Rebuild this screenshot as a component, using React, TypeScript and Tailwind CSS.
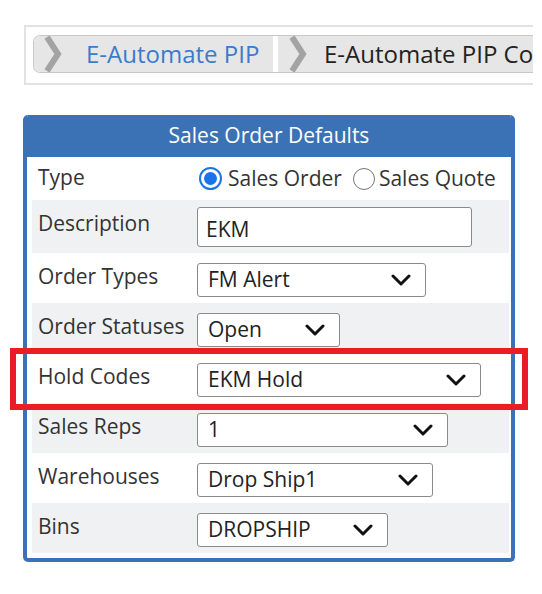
import React from 'react';

function Chevron() {
  return (
    <svg width="20" height="12" viewBox="0 0 20 12" className="shrink-0">
      <polyline points="2,2 10,10 18,2" fill="none" stroke="#111" strokeWidth="3" strokeLinecap="round" strokeLinejoin="round" />
    </svg>
  );
}

function Select({ value, width }: { value: string; width: string }) {
  return (
    <div className={`${width} h-[34px] flex items-center justify-between pl-[10px] pr-[14px] bg-white border border-[#8a8a8a] rounded-[3px] text-[#222]`}>
      <span>{value}</span>
      <Chevron />
    </div>
  );
}

const rows = [
  { label: 'Order Types', value: 'FM Alert', width: 'w-[229px]', bg: 'bg-white' },
  { label: 'Order Statuses', value: 'Open', width: 'w-[143px]', bg: 'bg-[#f0f1f3]' },
  { label: 'Hold Codes', value: 'EKM Hold', width: 'w-[284px]', bg: 'bg-white' },
  { label: 'Sales Reps', value: '1', width: 'w-[251px]', bg: 'bg-[#f0f1f3]' },
  { label: 'Warehouses', value: 'Drop Ship1', width: 'w-[236px]', bg: 'bg-white' },
  { label: 'Bins', value: 'DROPSHIP', width: 'w-[191px]', bg: 'bg-[#f0f1f3]' },
];

export default function App() {
  return (
    <div className="relative w-[542px] h-[594px] bg-white font-['Open_Sans',sans-serif] text-[21px] text-[#333] overflow-hidden">
      {/* breadcrumb */}
      <div className="ml-[24px] mt-[25px] w-[509px] h-[60px] border-y-2 border-l-2 border-[#e2e2e2] pl-[7px] pt-[8px]">
        <div className="h-[38px] flex overflow-hidden rounded-l-[7px] border-y border-l border-[#c9c9c9]">
          <div className="flex items-center h-full bg-[#e6e6e6] shrink-0">
            <svg width="20" height="36" viewBox="0 0 20 36" className="ml-[9px] shrink-0">
              <polyline points="4,1 15,18 4,35" fill="none" stroke="#a3a3a3" strokeWidth="6" />
            </svg>
            <span className="ml-[23px] w-[187px] whitespace-nowrap text-[24px] text-[#3b7bcb]">E-Automate PIP</span>
          </div>
          <div className="w-[5px] bg-white shrink-0" />
          <div className="flex items-center h-full bg-[#e6e6e6] grow">
            <svg width="18" height="36" viewBox="0 0 18 36" className="ml-[11px] shrink-0">
              <polyline points="3,1 14,18 3,35" fill="none" stroke="#a3a3a3" strokeWidth="6" />
            </svg>
            <span className="ml-[17px] whitespace-nowrap text-[24px] text-[#222]">E-Automate PIP Configuration</span>
          </div>
        </div>
      </div>

      {/* panel */}
      <div className="ml-[23px] mt-[30px] w-[492px] border-[4px] border-t-0 border-[#3b72b6] rounded-[5px] overflow-hidden">
        <div className="h-[42px] bg-[#3b72b6] text-white text-center pt-[5px]">Sales Order Defaults</div>
        <div className="pl-[5px] pr-[2px] pb-[5px]">
          <div className="h-[43px] flex items-center bg-white">
            <div className="w-[167px] pl-[6px] -mt-[2px]">Type</div>
            <label className="flex items-center">
              <span className="w-[23px] h-[23px] rounded-full border-2 border-[#1a73e8] flex items-center justify-center">
                <span className="w-[13px] h-[13px] rounded-full bg-[#1a73e8]" />
              </span>
              <span className="ml-[6px] text-[#333]">Sales Order</span>
            </label>
            <label className="flex items-center ml-[11px]">
              <span className="w-[22px] h-[22px] rounded-full border border-[#767676]" />
              <span className="ml-[4px] text-[#333]">Sales Quote</span>
            </label>
          </div>
          <div className="h-[53px] flex items-start bg-[#f0f1f3] pt-[7px]">
            <div className="w-[165px] pl-[6px] pt-[1px]">Description</div>
            <div className="w-[275px] h-[40px] bg-white border border-[#8a8a8a] rounded-[3px] flex items-center pl-[8px] pt-[6px] text-[#222]">EKM</div>
          </div>
          {rows.map((r) => (
            <div key={r.label} className={`h-[50px] flex items-start pt-[10px] ${r.bg}`}>
              <div className="w-[165px] pl-[6px] -mt-[2px]">{r.label}</div>
              <Select value={r.value} width={r.width} />
            </div>
          ))}
        </div>
      </div>

      {/* highlight */}
      <div className="absolute left-[10px] top-[348px] w-[518px] h-[62px] border-[6px] border-[#ec1c24]" />
    </div>
  );
}
